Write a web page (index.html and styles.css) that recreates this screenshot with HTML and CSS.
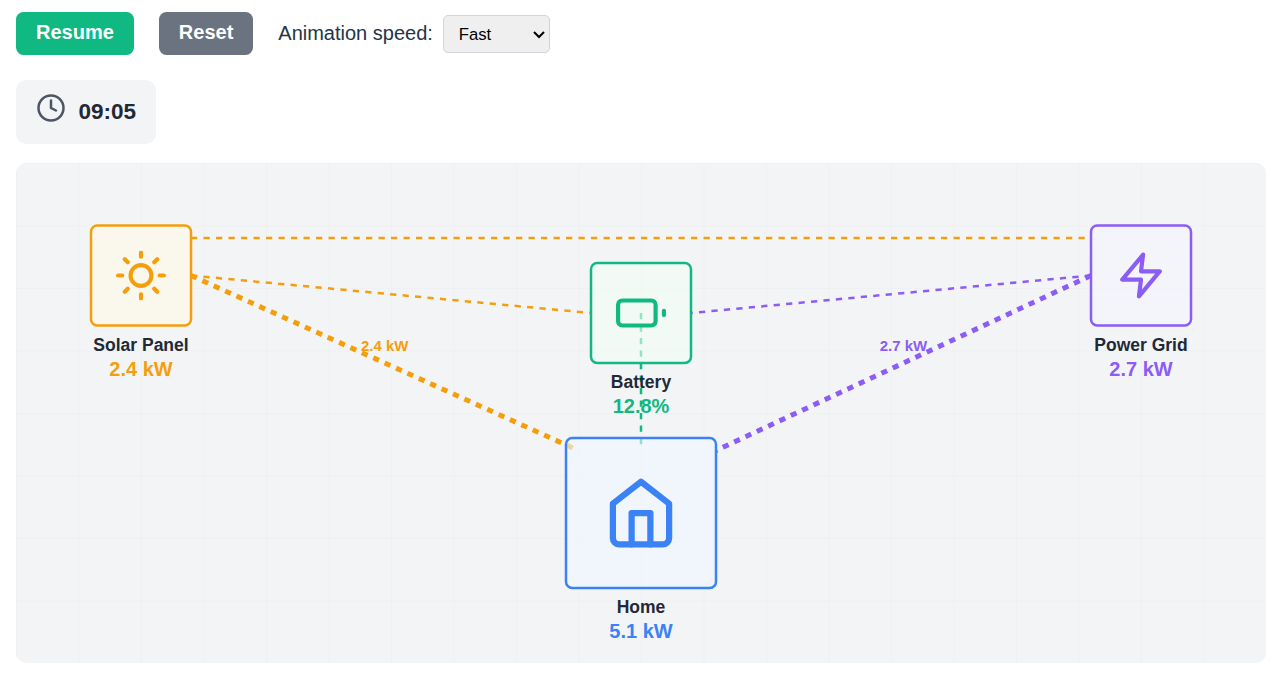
FILE: index.html
```html
<!DOCTYPE html>
<html lang="en">
<head>
<meta charset="utf-8">
<title>Energy flow</title>
<link rel="stylesheet" href="styles.css">
</head>
<body>
<main class="app">
  <div class="controls">
    <button class="btn btn-resume" type="button">Resume</button>
    <button class="btn btn-reset" type="button">Reset</button>
    <div class="speed">
      <label for="speed">Animation speed:</label>
      <select id="speed" class="speed-select">
        <option>Slow</option>
        <option>Normal</option>
        <option selected>Fast</option>
      </select>
    </div>
  </div>

  <div class="clock">
    <svg class="clock-icon" viewBox="0 0 24 24"><circle cx="12" cy="12" r="10"/><polyline points="12 6 12 12 16 14"/></svg>
    <span class="clock-time">09:05</span>
  </div>

  <svg class="diagram" viewBox="0 0 1000 400">
    <defs>
      <pattern id="grid" width="50" height="50" patternUnits="userSpaceOnUse">
        <path class="grid-line" d="M50 0H0V50"/>
      </pattern>
    </defs>
    <rect width="1000" height="400" fill="url(#grid)"/>

    <g class="flows">
      <path class="flow solar" d="M140 60L860 60"/>
      <path class="flow solar" d="M140 90L460 120"/>
      <path class="flow flow-active solar" d="M140 90L450 230"/>
      <path class="flow grid" d="M860 90L540 120"/>
      <path class="flow flow-active grid" d="M860 90L560 230"/>
      <path class="flow battery" d="M500 120L500 230"/>
    </g>
    <text class="flow-label solar" x="295" y="150">2.4 kW</text>
    <text class="flow-label grid" x="710" y="150">2.7 kW</text>

    <g class="node solar">
      <rect class="box" x="60" y="50" width="80" height="80" rx="5"/>
      <svg class="icon" x="80" y="70" width="40" height="40" viewBox="0 0 24 24">
        <circle cx="12" cy="12" r="5"/>
        <path d="M12 1v2M12 21v2M4.22 4.22l1.42 1.42M18.36 18.36l1.42 1.42M1 12h2M21 12h2M4.22 19.78l1.42-1.42M18.36 5.64l1.42-1.42"/>
      </svg>
      <text class="name" x="100" y="150">Solar Panel</text>
      <text class="value" x="100" y="170">2.4 kW</text>
    </g>

    <g class="node battery">
      <rect class="box" x="460" y="80" width="80" height="80" rx="5"/>
      <svg class="icon" x="480" y="100" width="40" height="40" viewBox="0 0 24 24">
        <rect x="1" y="6" width="18" height="12" rx="2"/>
        <path d="M23 13v-2"/>
      </svg>
      <text class="name" x="500" y="180">Battery</text>
      <text class="value" x="500" y="200">12.8%</text>
    </g>

    <g class="node grid">
      <rect class="box" x="860" y="50" width="80" height="80" rx="5"/>
      <svg class="icon" x="880" y="70" width="40" height="40" viewBox="0 0 24 24">
        <polygon points="13 2 3 14 12 14 11 22 21 10 12 10 13 2"/>
      </svg>
      <text class="name" x="900" y="150">Power Grid</text>
      <text class="value" x="900" y="170">2.7 kW</text>
    </g>

    <g class="node home">
      <rect class="box" x="440" y="220" width="120" height="120" rx="5"/>
      <svg class="icon" x="470" y="250" width="60" height="60" viewBox="0 0 24 24">
        <path d="M3 9l9-7 9 7v11a2 2 0 0 1-2 2H5a2 2 0 0 1-2-2z"/>
        <polyline points="9 22 9 12 15 12 15 22"/>
      </svg>
      <text class="name" x="500" y="360">Home</text>
      <text class="value" x="500" y="380">5.1 kW</text>
    </g>
  </svg>
</main>
</body>
</html>
```
FILE: styles.css
```css
* { box-sizing: border-box; }

body {
  margin: 0;
  background: #fff;
  color: #1f2937;
  font-family: "Liberation Sans", Arial, sans-serif;
  font-size: 20px;
}

.app {
  display: flex;
  flex-direction: column;
  align-items: flex-start;
  padding: 12px 16px 0;
}

.controls {
  display: flex;
  align-items: center;
  gap: 25px;
  margin-bottom: 25px;
}

.btn {
  height: 43px;
  padding: 0 20px 2px;
  border: 0;
  border-radius: 7.5px;
  color: #fff;
  font: 600 20px/23px "Liberation Sans", Arial, sans-serif;
}
.btn-resume { background: #10b981; }
.btn-reset { background: #6b7280; }

.speed {
  display: flex;
  align-items: center;
  gap: 10px;
  color: #213547;
}
.speed-select {
  zoom: 1.25;
  width: 85.6px;
  height: 30.4px;
  margin-top: 0.8px;
  padding: 0 0 0 8px;
  border: 1px solid #d1d5db;
  border-radius: 4px;
  background-color: #efefef;
  color: #000;
  font: 13.3333px "Liberation Sans", Arial, sans-serif;
}

.clock {
  display: flex;
  align-items: flex-start;
  gap: 12.5px;
  height: 64px;
  margin-bottom: 19px;
  padding: 13px 20px;
  border-radius: 10px;
  background: #f3f4f6;
}
.clock-icon {
  width: 30px;
  height: 30px;
  fill: none;
  stroke: #4b5563;
  stroke-width: 2;
  stroke-linecap: round;
  stroke-linejoin: round;
}
.clock-time {
  padding-top: 6px;
  font-size: 22.5px;
  font-weight: 700;
  line-height: 26px;
}

.diagram {
  width: 1250px;
  height: 500px;
  border-radius: 10px;
  background: #f3f4f6;
}
.grid-line {
  fill: none;
  stroke: #e5e7eb;
  stroke-width: 0.5;
}

.solar { --tone: #f59e0b; --tint: #fffae6; }
.battery { --tone: #10b981; --tint: #f0fdf4; }
.grid { --tone: #8b5cf6; --tint: #f5f3ff; }
.home { --tone: #3b82f6; --tint: #eff6ff; }

.flow {
  fill: none;
  stroke: var(--tone);
  stroke-width: 2;
  stroke-dasharray: 5 5;
}
.flow-active { stroke-width: 4; }
.flow-label {
  fill: var(--tone);
  font-size: 12px;
  font-weight: 700;
  text-anchor: middle;
}

.box {
  fill: var(--tint);
  fill-opacity: 0.6;
  stroke: var(--tone);
  stroke-width: 2;
}
.icon {
  fill: none;
  stroke: var(--tone);
  stroke-width: 2;
  stroke-linecap: round;
  stroke-linejoin: round;
}
.name {
  fill: #1f2937;
  font-size: 14px;
  font-weight: 600;
  text-anchor: middle;
}
.value {
  fill: var(--tone);
  font-size: 16px;
  font-weight: 700;
  text-anchor: middle;
}
```
